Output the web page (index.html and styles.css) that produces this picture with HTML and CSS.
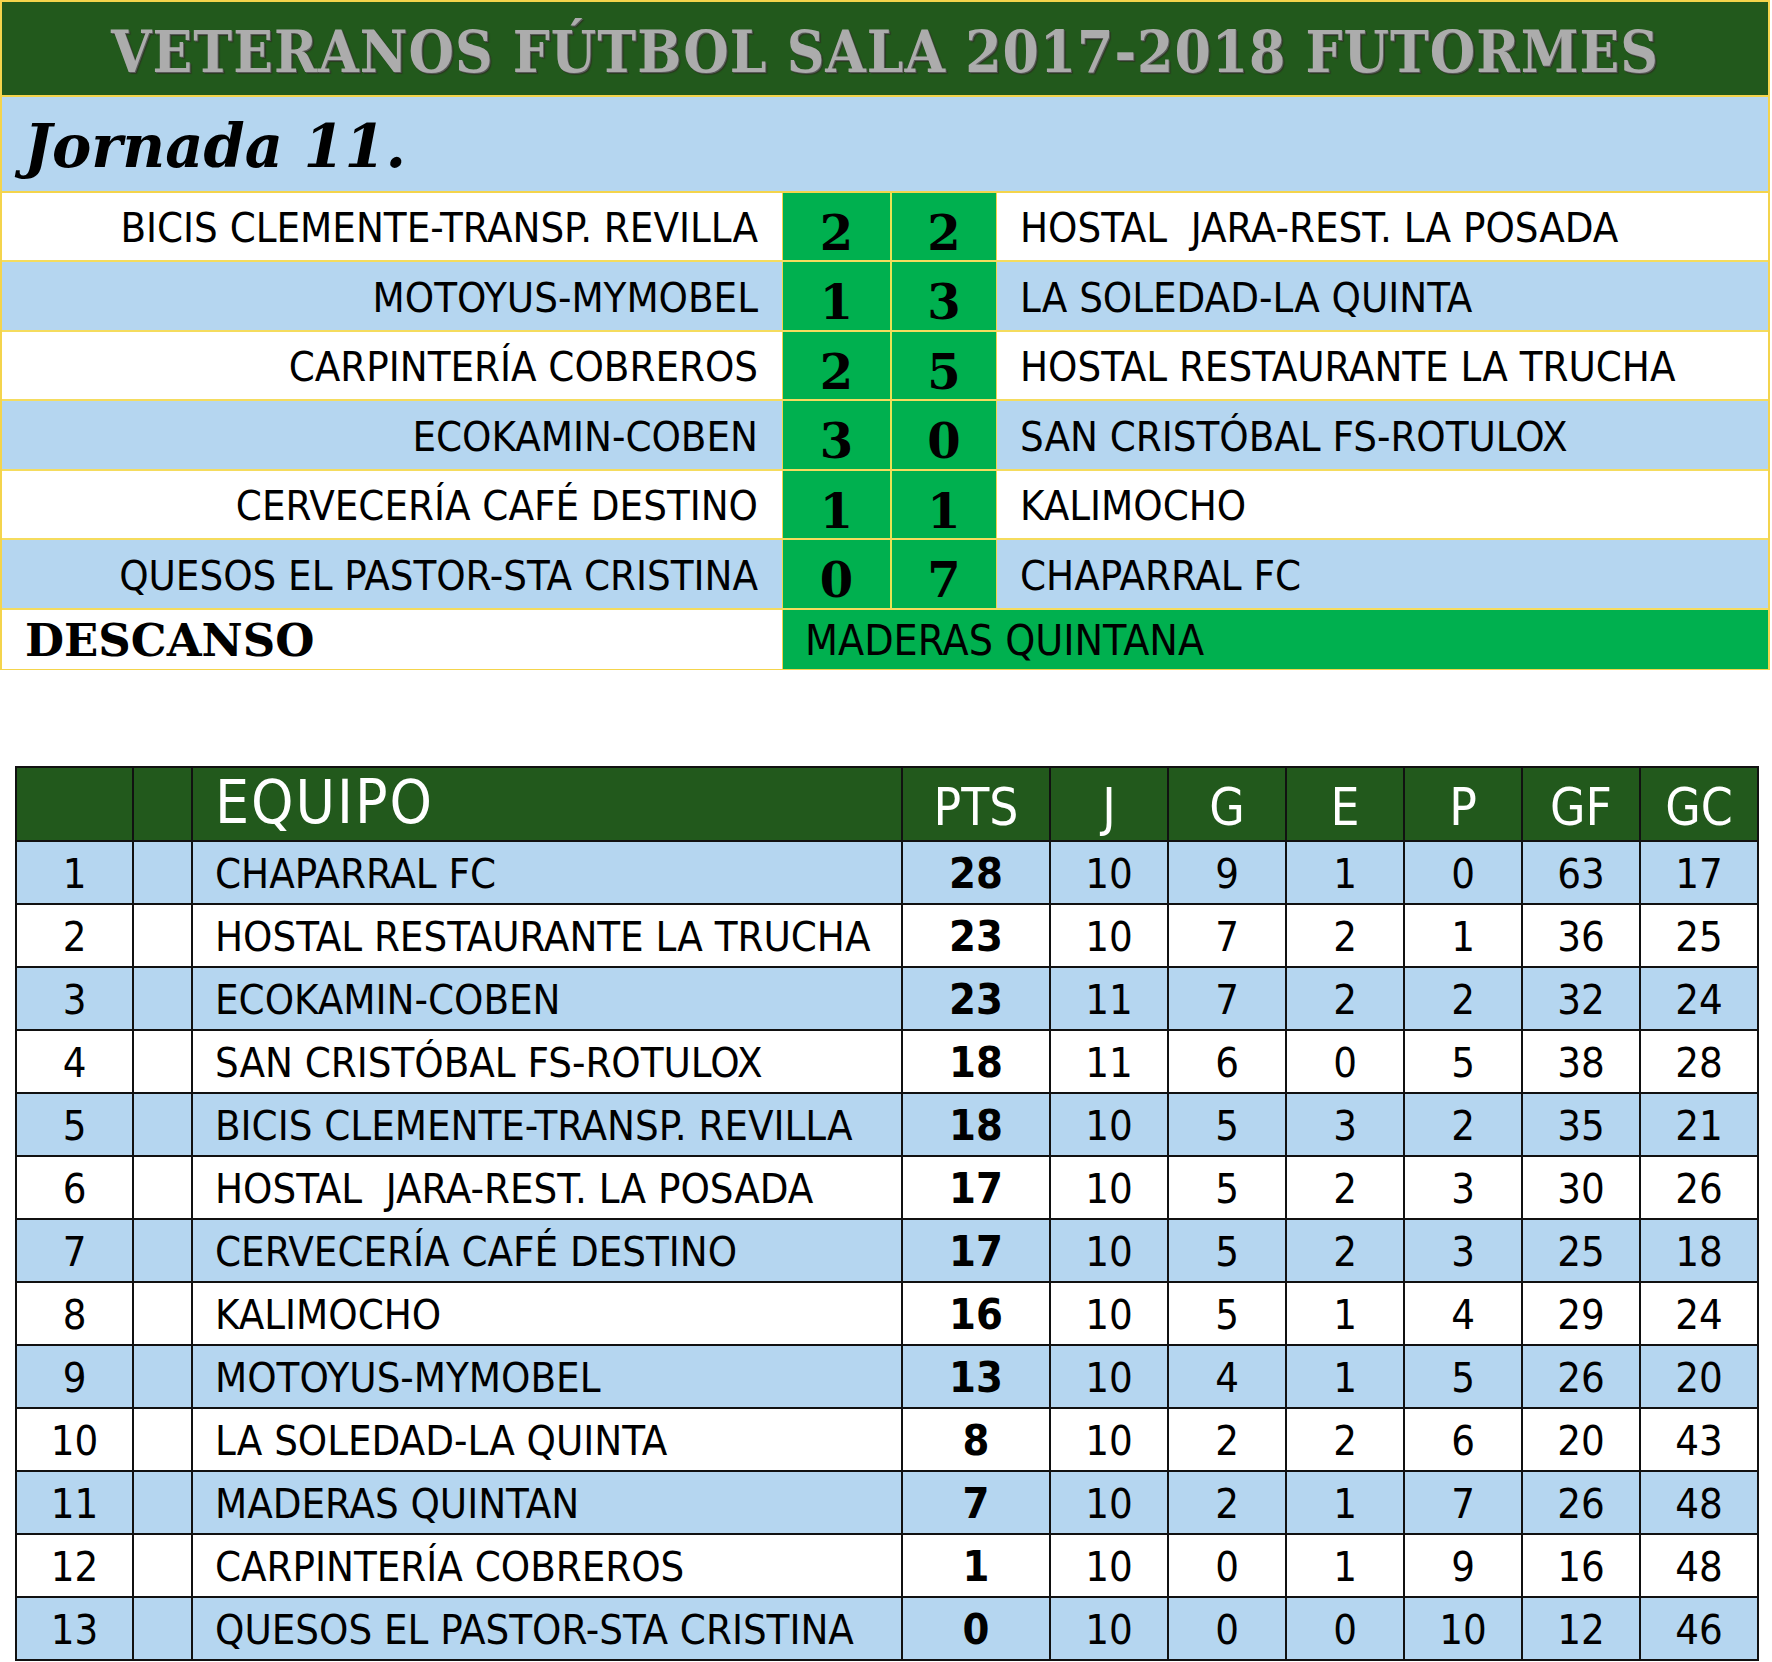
FILE: index.html
```html
<!DOCTYPE html>
<html lang="es">
<head>
<meta charset="utf-8">
<title>Veteranos Fútbol Sala 2017-2018 Futormes</title>
<link rel="stylesheet" href="styles.css">
</head>
<body>
<div class="page">
  <section class="fixtures">
    <div class="title"><span class="title-text">VETERANOS FÚTBOL SALA 2017-2018 FUTORMES</span></div>
    <div class="jornada">Jornada 11.</div>
    <div class="match row-white">
      <div class="home">BICIS CLEMENTE-TRANSP. REVILLA</div><div class="score">2</div><div class="score">2</div><div class="away">HOSTAL&nbsp; JARA-REST. LA POSADA</div>
    </div>
    <div class="match row-blue">
      <div class="home">MOTOYUS-MYMOBEL</div><div class="score">1</div><div class="score">3</div><div class="away">LA SOLEDAD-LA QUINTA</div>
    </div>
    <div class="match row-white">
      <div class="home">CARPINTERÍA COBREROS</div><div class="score">2</div><div class="score">5</div><div class="away">HOSTAL RESTAURANTE LA TRUCHA</div>
    </div>
    <div class="match row-blue">
      <div class="home">ECOKAMIN-COBEN</div><div class="score">3</div><div class="score">0</div><div class="away">SAN CRISTÓBAL FS-ROTULOX</div>
    </div>
    <div class="match row-white">
      <div class="home">CERVECERÍA CAFÉ DESTINO</div><div class="score">1</div><div class="score">1</div><div class="away">KALIMOCHO</div>
    </div>
    <div class="match row-blue">
      <div class="home">QUESOS EL PASTOR-STA CRISTINA</div><div class="score">0</div><div class="score">7</div><div class="away">CHAPARRAL FC</div>
    </div>
    <div class="rest">
      <div class="rest-label">DESCANSO</div><div class="rest-team">MADERAS QUINTANA</div>
    </div>
  </section>

  <table class="standings">
    <colgroup>
      <col class="c-pos"><col class="c-blank"><col class="c-team"><col class="c-pts">
      <col class="c-num"><col class="c-num"><col class="c-num"><col class="c-num"><col class="c-num"><col class="c-num">
    </colgroup>
    <thead>
      <tr>
        <th></th><th></th><th class="team head-team">EQUIPO</th><th>PTS</th><th>J</th><th>G</th><th>E</th><th>P</th><th>GF</th><th>GC</th>
      </tr>
    </thead>
    <tbody>
      <tr class="row-blue"><td>1</td><td></td><td class="team">CHAPARRAL FC</td><td class="pts">28</td><td>10</td><td>9</td><td>1</td><td>0</td><td>63</td><td>17</td></tr>
      <tr class="row-white"><td>2</td><td></td><td class="team">HOSTAL RESTAURANTE LA TRUCHA</td><td class="pts">23</td><td>10</td><td>7</td><td>2</td><td>1</td><td>36</td><td>25</td></tr>
      <tr class="row-blue"><td>3</td><td></td><td class="team">ECOKAMIN-COBEN</td><td class="pts">23</td><td>11</td><td>7</td><td>2</td><td>2</td><td>32</td><td>24</td></tr>
      <tr class="row-white"><td>4</td><td></td><td class="team">SAN CRISTÓBAL FS-ROTULOX</td><td class="pts">18</td><td>11</td><td>6</td><td>0</td><td>5</td><td>38</td><td>28</td></tr>
      <tr class="row-blue"><td>5</td><td></td><td class="team">BICIS CLEMENTE-TRANSP. REVILLA</td><td class="pts">18</td><td>10</td><td>5</td><td>3</td><td>2</td><td>35</td><td>21</td></tr>
      <tr class="row-white"><td>6</td><td></td><td class="team">HOSTAL&nbsp; JARA-REST. LA POSADA</td><td class="pts">17</td><td>10</td><td>5</td><td>2</td><td>3</td><td>30</td><td>26</td></tr>
      <tr class="row-blue"><td>7</td><td></td><td class="team">CERVECERÍA CAFÉ DESTINO</td><td class="pts">17</td><td>10</td><td>5</td><td>2</td><td>3</td><td>25</td><td>18</td></tr>
      <tr class="row-white"><td>8</td><td></td><td class="team">KALIMOCHO</td><td class="pts">16</td><td>10</td><td>5</td><td>1</td><td>4</td><td>29</td><td>24</td></tr>
      <tr class="row-blue"><td>9</td><td></td><td class="team">MOTOYUS-MYMOBEL</td><td class="pts">13</td><td>10</td><td>4</td><td>1</td><td>5</td><td>26</td><td>20</td></tr>
      <tr class="row-white"><td>10</td><td></td><td class="team">LA SOLEDAD-LA QUINTA</td><td class="pts">8</td><td>10</td><td>2</td><td>2</td><td>6</td><td>20</td><td>43</td></tr>
      <tr class="row-blue"><td>11</td><td></td><td class="team">MADERAS QUINTAN</td><td class="pts">7</td><td>10</td><td>2</td><td>1</td><td>7</td><td>26</td><td>48</td></tr>
      <tr class="row-white"><td>12</td><td></td><td class="team">CARPINTERÍA COBREROS</td><td class="pts">1</td><td>10</td><td>0</td><td>1</td><td>9</td><td>16</td><td>48</td></tr>
      <tr class="row-blue"><td>13</td><td></td><td class="team">QUESOS EL PASTOR-STA CRISTINA</td><td class="pts">0</td><td>10</td><td>0</td><td>0</td><td>10</td><td>12</td><td>46</td></tr>
    </tbody>
  </table>
</div>
</body>
</html>
```

FILE: styles.css
```css
html, body {
  margin: 0;
  padding: 0;
  background: #ffffff;
}

.page {
  width: 1772px;
  font-family: "Liberation Sans Narrow", "DejaVu Sans Condensed", "Liberation Sans", sans-serif;
  color: #000;
}

/* ---------- fixtures ---------- */
.fixtures {
  width: 1770px;
  box-sizing: border-box;
  border: 2px solid #f4d44c;
  border-bottom-width: 1px;
}

.title {
  height: 95px;
  box-sizing: border-box;
  padding-top: 6px;
  background: #22591c;
  border-bottom: 2px solid #f4d44c;
  display: flex;
  align-items: center;
  justify-content: center;
}

.title-text {
  font-family: "DejaVu Serif Condensed", "DejaVu Serif", serif;
  font-weight: bold;
  font-size: 58px;
  color: #acacac;
  text-shadow: 1px 1px 0 #5a5a5a, 2px 2px 1px #2a3a20;
  white-space: nowrap;
  letter-spacing: 1px;
}

.jornada {
  height: 96px;
  background: #b5d6f0;
  border-bottom: 2px solid #f4d44c;
  display: flex;
  align-items: center;
  padding-left: 22px;
  padding-top: 4px;
  font-family: "DejaVu Serif", serif;
  font-weight: bold;
  font-style: italic;
  font-size: 59px;
  box-sizing: border-box;
}

.match {
  display: grid;
  grid-template-columns: 781px 109px 105px 1fr;
  grid-template-rows: 100%;
  border-bottom: 2px solid #f5dc5e;
}

.match.row-white { height: 67px; }
.match.row-blue { height: 68px; }

.row-white { background: #ffffff; }
.row-blue { background: #b5d6f0; }

.home,
.away {
  display: flex;
  align-items: center;
  font-size: 41.5px;
  line-height: 1.1;
  white-space: nowrap;
  padding-top: 3px;
  min-height: 0;
}

.home {
  justify-content: flex-end;
  padding-right: 24px;
  border-right: 1px solid #f4d44c;
}

.away {
  padding-left: 23px;
}

.score {
  background: #00b04f;
  display: flex;
  align-items: center;
  justify-content: center;
  font-family: "DejaVu Serif", serif;
  font-weight: bold;
  font-size: 48px;
  line-height: 1;
  padding-top: 12px;
  min-height: 0;
  box-sizing: border-box;
  border-right: 2px solid #e9e453;
}

.score + .score {
  border-right: 1px solid #f4d44c;
}

.rest {
  display: grid;
  grid-template-columns: 781px 1fr;
  grid-template-rows: 100%;
  height: 59px;
}

.rest-label {
  display: flex;
  align-items: center;
  padding-left: 23px;
  padding-top: 2px;
  font-family: "DejaVu Serif", serif;
  font-weight: bold;
  font-size: 45px;
  line-height: 1;
  background: #ffffff;
  border-right: 1px solid #f4d44c;
}

.rest-team {
  display: flex;
  align-items: center;
  padding-left: 22px;
  padding-top: 3px;
  background: #00b04f;
  font-size: 42.5px;
  line-height: 1;
  white-space: nowrap;
}

/* ---------- standings ---------- */
.standings {
  margin: 96px 0 0 15px;
  width: 1744px;
  border-collapse: collapse;
  table-layout: fixed;
  font-size: 41.5px;
}

.c-pos { width: 117px; }
.c-blank { width: 59px; }
.c-team { width: 710px; }
.c-pts { width: 148px; }
.c-num { width: 118px; }

.standings th,
.standings td {
  border: 2px solid #111;
  padding: 0;
  text-align: center;
  white-space: nowrap;
  font-weight: normal;
}

.standings thead tr {
  height: 74px;
  background: #22591c;
  color: #ffffff;
}

.standings th {
  vertical-align: bottom;
  padding-bottom: 7px;
  font-size: 51px;
  line-height: 1;
}

.standings th.head-team {
  font-size: 60px;
  padding-bottom: 8px;
  letter-spacing: 2px;
}

.standings tbody tr {
  height: 63px;
}

.standings td {
  vertical-align: middle;
  line-height: 1;
  padding-top: 2px;
}

.standings .team {
  text-align: left;
  padding-left: 22px;
}

.standings .pts {
  font-weight: bold;
  font-size: 43px;
}
```
